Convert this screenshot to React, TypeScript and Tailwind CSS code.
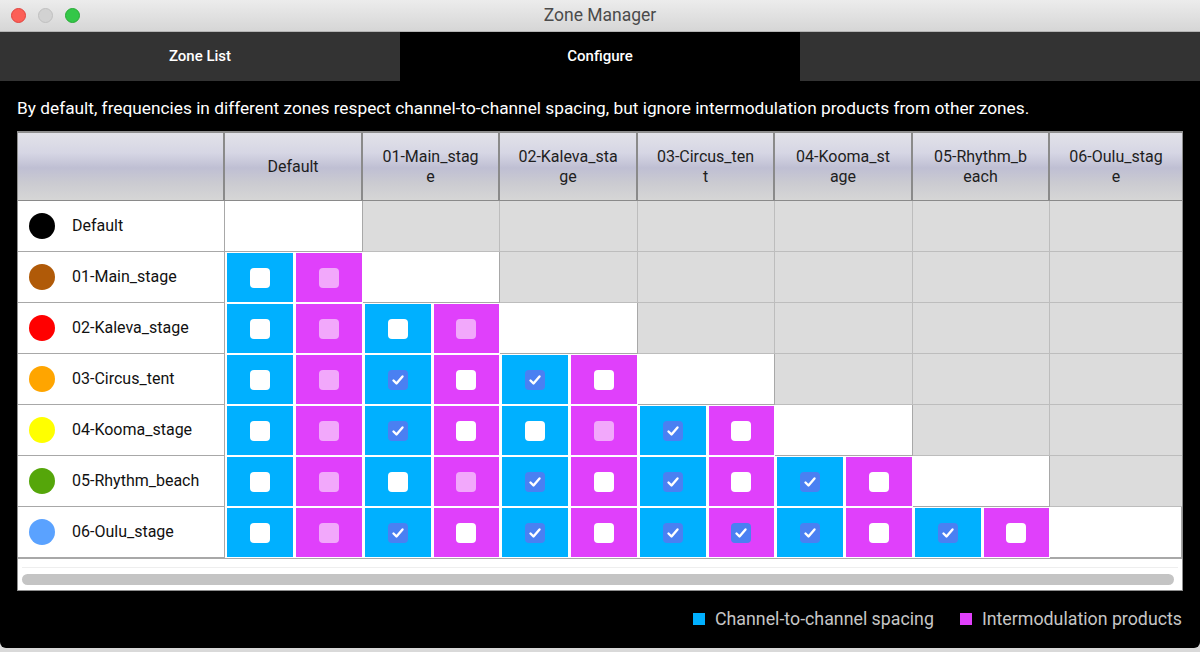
import { Fragment } from "react";

type Zone = {
  name: string;
  color: string;
  header: string[];
};

type Box = "u" | "c" | "d";

const zones: Zone[] = [
  { name: "Default", color: "#000000", header: ["Default"] },
  { name: "01-Main_stage", color: "#b05a08", header: ["01-Main_stag", "e"] },
  { name: "02-Kaleva_stage", color: "#ff0000", header: ["02-Kaleva_sta", "ge"] },
  { name: "03-Circus_tent", color: "#ffa500", header: ["03-Circus_ten", "t"] },
  { name: "04-Kooma_stage", color: "#ffff00", header: ["04-Kooma_st", "age"] },
  { name: "05-Rhythm_beach", color: "#55a60a", header: ["05-Rhythm_b", "each"] },
  { name: "06-Oulu_stage", color: "#5aa2ff", header: ["06-Oulu_stag", "e"] },
];

// [channel spacing, intermodulation] per zone pair, lower triangle only
const matrix: [Box, Box][][] = [
  [],
  [["u", "d"]],
  [["u", "d"], ["u", "d"]],
  [["u", "d"], ["c", "u"], ["c", "u"]],
  [["u", "d"], ["c", "u"], ["u", "d"], ["c", "u"]],
  [["u", "d"], ["u", "d"], ["c", "u"], ["c", "u"], ["c", "u"]],
  [["u", "d"], ["c", "u"], ["c", "u"], ["c", "c"], ["c", "u"], ["c", "u"]],
];

const headerBg =
  "bg-[linear-gradient(to_bottom,#e2e2e9_0%,#d6d6e4_30%,#bfbfd3_52%,#cbcbd1_75%,#d6d6d6_100%)]";

function CheckBox({ state }: { state: Box }) {
  if (state === "c") {
    return (
      <div className="w-[20px] h-[20px] rounded-[4px] bg-[#4a80f2] flex items-center justify-center">
        <svg width="16" height="16" viewBox="0 0 16 16">
          <path d="M3.5 8.5l3 3L12.5 4.5" fill="none" stroke="white" strokeWidth="2.4" strokeLinecap="round" strokeLinejoin="round" />
        </svg>
      </div>
    );
  }
  if (state === "d") {
    return <div className="w-[20px] h-[20px] rounded-[4px] bg-[#f2a8fb]" />;
  }
  return <div className="w-[20px] h-[20px] rounded-[4px] bg-white" />;
}

function PairCell({ pair }: { pair: [Box, Box] }) {
  return (
    <div className="h-[51px] bg-white pl-[2px] pr-px py-px flex gap-[3px]">
      <div className="flex-1 bg-[#00b0ff] flex items-center justify-center">
        <CheckBox state={pair[0]} />
      </div>
      <div className="flex-1 bg-[#e040fb] flex items-center justify-center">
        <CheckBox state={pair[1]} />
      </div>
    </div>
  );
}

export default function App() {
  return (
    <div className="w-[1200px] h-[652px] bg-[#d9d9d9] overflow-hidden font-['Roboto',sans-serif]">
      <div className="h-[648px] bg-black rounded-b-[6px] flex flex-col overflow-hidden">
        {/* title bar */}
        <div className="h-[32px] relative flex items-center justify-center bg-[linear-gradient(to_bottom,#ececec,#d6d6d6)] border-b border-[#b4b4b4]">
          <div className="absolute left-[11px] top-[8px] flex gap-[12px]">
            <div className="w-[15px] h-[15px] rounded-full bg-[#fc5f57] border border-[#e0443e]" />
            <div className="w-[15px] h-[15px] rounded-full bg-[#d2d2d2] border border-[#c0c0c0]" />
            <div className="w-[15px] h-[15px] rounded-full bg-[#33c748] border border-[#27aa35]" />
          </div>
          <span className="text-[17.5px] text-[#4b4b4b]">Zone Manager</span>
        </div>

        {/* tabs */}
        <div className="h-[49px] grid grid-cols-3 text-white text-[15px] font-medium">
          <div className="bg-[#333333] flex items-center justify-center">Zone List</div>
          <div className="bg-black flex items-center justify-center">Configure</div>
          <div className="bg-[#333333]" />
        </div>

        <div className="px-[17px] flex flex-col">
          <p className="text-white text-[17.3px] leading-[20px] mt-[17px] mb-[13px]">
            By default, frequencies in different zones respect channel-to-channel spacing, but ignore intermodulation products from other zones.
          </p>

          {/* zone matrix, last column clipped by the scroll area */}
          <div className="bg-white border border-[#8e8e8e] border-t-2">
            <div className="grid grid-cols-[207px_138px_137px_138px_137px_138px_137px_1fr]">
              <div className={`h-[68px] border-r-2 border-b border-[#8a8a8a] ${headerBg}`} />
              {zones.map((z, i) => (
                <div
                  key={z.name}
                  className={`h-[68px] border-b border-[#8a8a8a] ${i < zones.length - 1 ? "border-r-2" : ""} ${headerBg} flex flex-col items-center justify-center text-[16px] leading-[20px] text-[#1e1e1e]`}
                >
                  {z.header.map((line) => (
                    <span key={line}>{line}</span>
                  ))}
                </div>
              ))}

              {zones.map((row, r) => (
                <Fragment key={row.name}>
                  <div className="h-[51px] border-r border-b border-[#a8a8a8] flex items-center pl-[11px] gap-[17px]">
                    <div className="w-[26px] h-[26px] rounded-full" style={{ backgroundColor: row.color }} />
                    <span className="text-[16px] text-[#111]">{row.name}</span>
                  </div>
                  {zones.map((col, c) => {
                    if (c < r) return <PairCell key={col.name} pair={matrix[r][c]} />;
                    if (c === r)
                      return <div key={col.name} className="h-[51px] bg-white border-r border-b border-[#a8a8a8]" />;
                    return (
                      <div
                        key={col.name}
                        className={`h-[51px] bg-[#dcdcdc] border-b border-[#bdbdbd] ${c < zones.length - 1 ? "border-r" : ""}`}
                      />
                    );
                  })}
                </Fragment>
              ))}
            </div>

            {/* horizontal scroll bar */}
            <div className="h-[32px] bg-white pt-[10px] px-[4px] border-t border-[#a8a8a8]">
              <div className="h-[1px] bg-[#eeeeee] -mt-[2px] mb-[6px]" />
              <div className="h-[11px] w-[1152px] rounded-full bg-[#c4c4c4]" />
            </div>
          </div>

          {/* legend */}
          <div className="h-[56px] flex items-center justify-end gap-[26px] text-[17.8px] text-[#c6c6c6] pr-px">
            <div className="flex items-center gap-[10px]">
              <div className="w-[12px] h-[12px] bg-[#00b0ff]" />
              <span>Channel-to-channel spacing</span>
            </div>
            <div className="flex items-center gap-[10px]">
              <div className="w-[12px] h-[12px] bg-[#e040fb]" />
              <span>Intermodulation products</span>
            </div>
          </div>
        </div>
      </div>
    </div>
  );
}
